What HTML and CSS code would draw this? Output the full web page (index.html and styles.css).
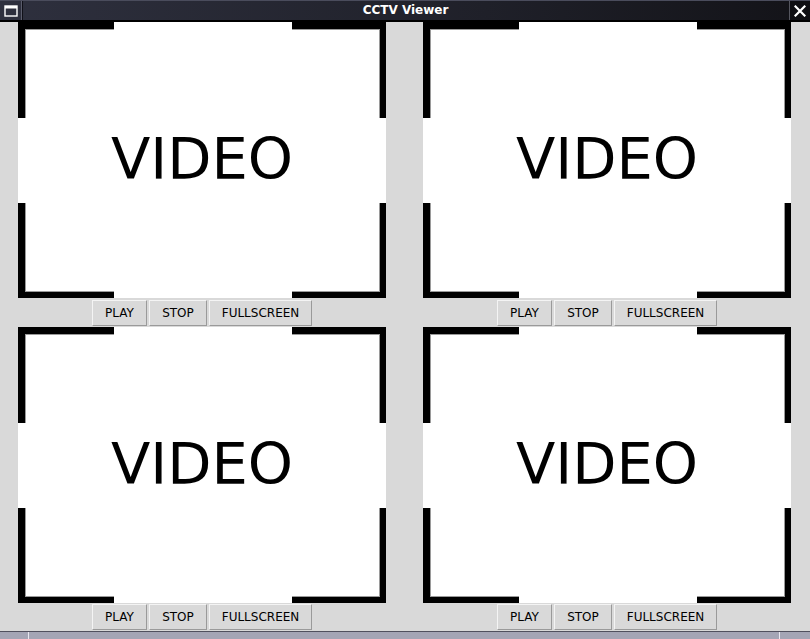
FILE: index.html
```html
<!DOCTYPE html>
<html>
<head>
<meta charset="utf-8">
<title>CCTV Viewer</title>
<link rel="stylesheet" href="styles.css">
</head>
<body>
<div class="window">
  <div class="titlebar">
    <div class="tb-btn tb-menu">
      <svg width="14" height="12" viewBox="0 0 14 12"><rect x="1" y="1" width="12" height="10" fill="none" stroke="#fff" stroke-width="1.4"/><rect x="1" y="1" width="12" height="2.5" fill="#fff"/></svg>
    </div>
    <div class="tb-title">CCTV Viewer</div>
    <div class="tb-btn tb-close">
      <svg width="12" height="12" viewBox="0 0 12 12"><path d="M1.5 1.5 L10.5 10.5 M10.5 1.5 L1.5 10.5" stroke="#fff" stroke-width="2.2" stroke-linecap="square"/></svg>
    </div>
  </div>
  <div class="grid">
    <div class="cell row1">
      <div class="frame"><span class="c tl"></span><span class="c tr"></span><span class="c bl"></span><span class="c br"></span><div class="label">VIDEO</div></div>
      <div class="buttons"><button class="btn b-play">PLAY</button><button class="btn b-stop">STOP</button><button class="btn b-full">FULLSCREEN</button></div>
    </div>
    <div class="cell row1">
      <div class="frame"><span class="c tl"></span><span class="c tr"></span><span class="c bl"></span><span class="c br"></span><div class="label">VIDEO</div></div>
      <div class="buttons"><button class="btn b-play">PLAY</button><button class="btn b-stop">STOP</button><button class="btn b-full">FULLSCREEN</button></div>
    </div>
    <div class="cell row2">
      <div class="frame"><span class="c tl"></span><span class="c tr"></span><span class="c bl"></span><span class="c br"></span><div class="label">VIDEO</div></div>
      <div class="buttons"><button class="btn b-play">PLAY</button><button class="btn b-stop">STOP</button><button class="btn b-full">FULLSCREEN</button></div>
    </div>
    <div class="cell row2">
      <div class="frame"><span class="c tl"></span><span class="c tr"></span><span class="c bl"></span><span class="c br"></span><div class="label">VIDEO</div></div>
      <div class="buttons"><button class="btn b-play">PLAY</button><button class="btn b-stop">STOP</button><button class="btn b-full">FULLSCREEN</button></div>
    </div>
  </div>
  <div class="bottombar">
    <div class="bb-seg bb-left"></div>
    <div class="bb-seg bb-mid"></div>
    <div class="bb-seg bb-right"></div>
  </div>
</div>
</body>
</html>
```

FILE: styles.css
```css
* { box-sizing: border-box; }
html, body { margin: 0; padding: 0; }
body {
  width: 810px;
  height: 639px;
  overflow: hidden;
  background: #d9d9d9;
  font-family: "DejaVu Sans", sans-serif;
}
.window {
  width: 810px;
  height: 639px;
  display: flex;
  flex-direction: column;
}
.titlebar {
  height: 22px;
  display: flex;
  align-items: stretch;
  background: linear-gradient(to right, #2e303e, #1f2029 60%, #131318);
  border-top: 1px solid #4a4c5c;
  border-bottom: 2px solid #000;
}
.tb-btn {
  width: 22px;
  display: flex;
  align-items: center;
  justify-content: center;
}
.tb-menu {
  border-right: 1px solid #5a5c6c;
  box-shadow: 1px 0 0 #101018;
}
.tb-close {
  width: 21px;
  border-left: 1px solid #55565f;
  background: #0e0e12;
}
.tb-title {
  flex: 1;
  color: #fff;
  font-weight: bold;
  font-size: 12px;
  line-height: 19px;
  text-align: center;
}
.grid {
  display: grid;
  grid-template-columns: 405px 405px;
  grid-template-rows: 305px 304px;
}
.cell {
  padding-left: 18px;
  display: flex;
  flex-direction: column;
}
.frame {
  position: relative;
  width: 368px;
  height: 276px;
  background: #fff;
  display: flex;
  align-items: center;
  justify-content: center;
}
.label {
  font-size: 57.5px;
  line-height: 1;
  color: #000;
  margin-top: -1px;
}
.c {
  position: absolute;
  width: 96px;
  height: 96px;
  border: 0 solid #000;
}
.tl { top: 0; left: 0; border-top-width: 7px; border-left-width: 7px; box-shadow: inset 1px 1px 0 #9a9a9a; }
.tr { top: 0; right: 0; width: 94px; border-top-width: 7px; border-right-width: 6px; box-shadow: inset -1px 1px 0 #9a9a9a; }
.bl { bottom: 0; left: 0; height: 95px; border-bottom-width: 6px; border-left-width: 7px; box-shadow: inset 1px -1px 0 #9a9a9a; }
.br { bottom: 0; right: 0; width: 94px; height: 95px; border-bottom-width: 6px; border-right-width: 6px; box-shadow: inset -1px -1px 0 #9a9a9a; }
.buttons {
  width: 368px;
  display: flex;
  justify-content: center;
  gap: 2px;
  margin-top: 2px;
}
.row2 .buttons { margin-top: 1px; }
.btn {
  height: 26px;
  margin: 0;
  padding: 0;
  font-family: "DejaVu Sans", sans-serif;
  font-size: 12px;
  color: #000;
  background: #d9d9d9;
  border: 1px solid;
  border-color: #f4f4f4 #9a9a9a #9a9a9a #f4f4f4;
  border-radius: 0;
}
.b-play { width: 55px; }
.b-stop { width: 58px; }
.b-full { width: 103px; }
.bottombar {
  height: 8px;
  display: flex;
  border-top: 1px solid #50505e;
  background: #a4a5b5;
}
.bb-seg { height: 100%; }
.bb-left { width: 29px; border-right: 1px solid #e8e8f0; }
.bb-mid { width: 751px; border-right: 1px solid #e8e8f0; }
.bb-right { flex: 1; }
```
